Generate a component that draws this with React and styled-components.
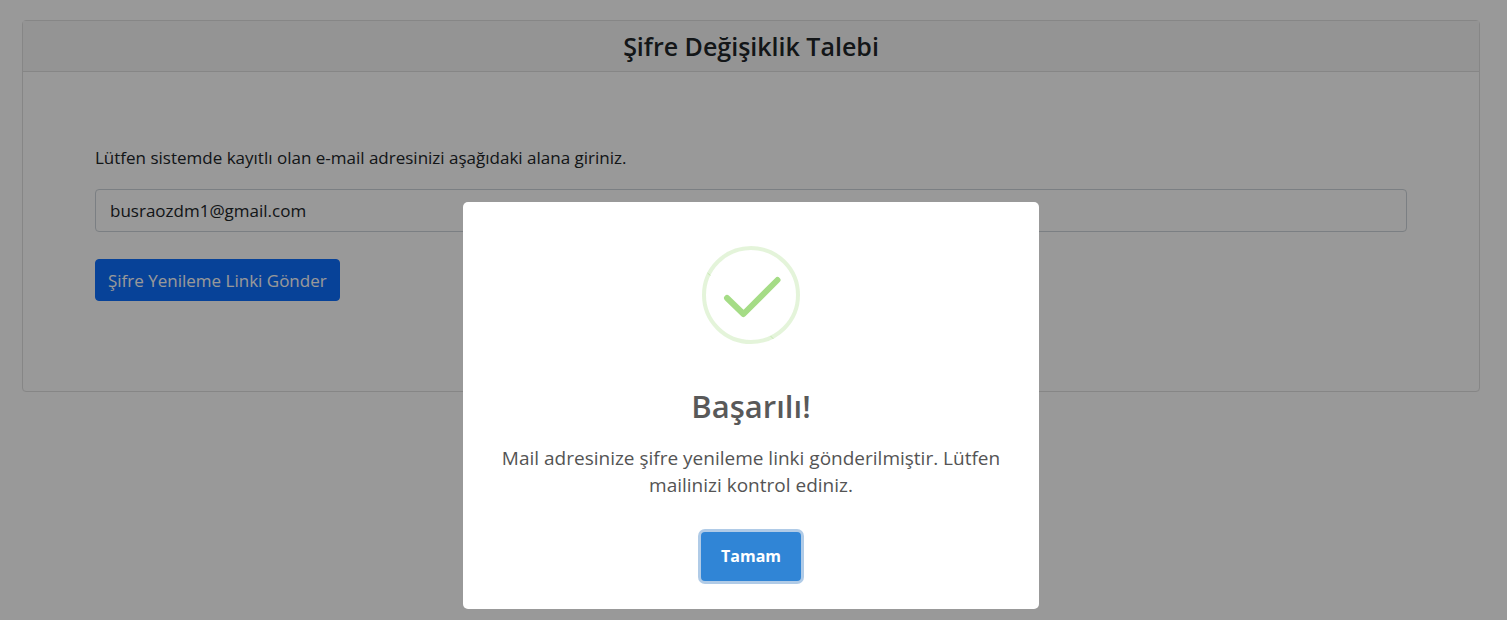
import React from "react";
import styled, { createGlobalStyle } from "styled-components";

const GlobalStyle = createGlobalStyle`
  *, *::before, *::after { box-sizing: border-box; }
  body {
    margin: 0;
    background: #fff;
    color: #212529;
    font-family: "Segoe UI", "Open Sans", "Noto Sans", sans-serif;
    font-size: 17px;
    line-height: 27px;
  }
`;

const Page = styled.main`
  padding: 20px 27px 20px 22px;
`;

const Card = styled.section`
  border: 1px solid #dfdfdf;
  border-radius: 4px;
  background: #fff;
`;

const CardHeader = styled.header`
  padding: 9px 18px;
  border-bottom: 1px solid #dfdfdf;
  background: #f7f7f7;
  text-align: center;
`;

const CardTitle = styled.h1`
  margin: 0;
  font-size: 25px;
  font-weight: 600;
  line-height: 32px;
`;

const ResetForm = styled.form`
  padding: 72px 72px 90px;
`;

const FieldLabel = styled.label`
  display: block;
  margin-bottom: 18px;
`;

const EmailInput = styled.input`
  display: block;
  width: 100%;
  margin-bottom: 27px;
  padding: 7px 14px;
  border: 1px solid #ced4da;
  border-radius: 4px;
  background: #fff;
  color: inherit;
  font: inherit;
`;

const SubmitButton = styled.button`
  display: block;
  padding: 7px 12px 6px;
  border: 1px solid #0d6efd;
  border-radius: 4px;
  background: #0d6efd;
  color: #fff;
  font: inherit;
`;

const Overlay = styled.div`
  position: fixed;
  inset: 0;
  display: flex;
  align-items: flex-start;
  justify-content: center;
  padding: 202px 5px 11px 0;
  background: rgba(0, 0, 0, 0.4);
`;

const Dialog = styled.div`
  display: flex;
  flex-direction: column;
  align-items: center;
  width: 100%;
  max-width: 576px;
  padding: 44px 36px 28px;
  border-radius: 5px;
  background: #fff;
  color: #545454;
  text-align: center;
`;

const SuccessIcon = styled.svg`
  width: 98px;
  height: 98px;
`;

const DialogTitle = styled.h2`
  margin: 40px 0 17px;
  color: #595959;
  font-size: 31px;
  font-weight: 600;
  line-height: 44px;
`;

const DialogText = styled.p`
  margin: 0 0 33px;
  font-size: 19px;
  line-height: 27px;
`;

const ConfirmButton = styled.button`
  padding: 11px 20px;
  border: 0;
  border-radius: 4px;
  background: #3085d6;
  box-shadow: 0 0 0 3px #b0cbe7;
  color: #fff;
  font: inherit;
  font-size: 16px;
  font-weight: 700;
  outline: none;
`;

export default function App() {
  return (
    <>
      <GlobalStyle />
      <Page>
        <Card>
          <CardHeader>
            <CardTitle>Şifre Değişiklik Talebi</CardTitle>
          </CardHeader>
          <ResetForm onSubmit={(event) => event.preventDefault()}>
            <FieldLabel htmlFor="email">
              Lütfen sistemde kayıtlı olan e-mail adresinizi aşağıdaki alana giriniz.
            </FieldLabel>
            <EmailInput id="email" type="email" defaultValue="busraozdm1@gmail.com" />
            <SubmitButton type="submit">Şifre Yenileme Linki Gönder</SubmitButton>
          </ResetForm>
        </Card>
      </Page>
      <Overlay>
        <Dialog role="dialog" aria-modal="true" aria-labelledby="dialog-title">
          <SuccessIcon viewBox="0 0 98 98" fill="none" aria-hidden="true">
            <circle cx="49" cy="49" r="47" stroke="#a5dc86" strokeOpacity="0.3" strokeWidth="4" />
            <path d="M5.5 27l3 2.5M68.5 90l3 3" stroke="#a5dc86" strokeOpacity="0.5" />
            <path
              d="M25 52L41.5 68L75.5 34"
              stroke="#a5dc86"
              strokeWidth="6"
              strokeLinecap="round"
              strokeLinejoin="round"
            />
          </SuccessIcon>
          <DialogTitle id="dialog-title">Başarılı!</DialogTitle>
          <DialogText>
            Mail adresinize şifre yenileme linki gönderilmiştir. Lütfen mailinizi kontrol ediniz.
          </DialogText>
          <ConfirmButton type="button">Tamam</ConfirmButton>
        </Dialog>
      </Overlay>
    </>
  );
}
